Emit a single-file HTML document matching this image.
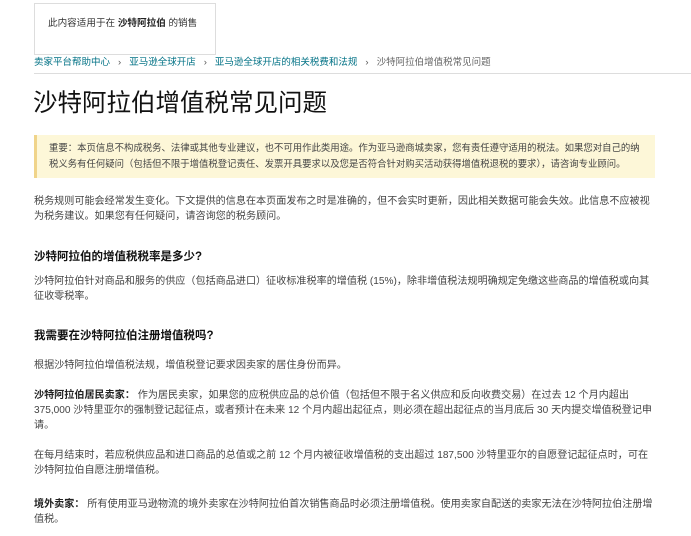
<!DOCTYPE html>
<html><head><meta charset="utf-8"><style>
body{margin:0;width:691px;height:536px;overflow:hidden;background:#fff;font-family:"Liberation Sans","Noto Sans CJK SC",sans-serif;color:#333;position:relative}
.a{position:absolute;white-space:nowrap}
.box{position:absolute;left:34px;top:3px;width:182px;height:52px;border:1px solid #ddd;box-sizing:border-box}
.bc{font-size:9.5px;color:#007185}
.bc .s{color:#555;margin:0 8px}
.bc .g{color:#666}
h1{position:absolute;left:33px;top:84px;margin:0;font-size:24.5px;font-weight:400;color:#111;white-space:nowrap}
.note{position:absolute;left:34px;top:135px;width:621px;height:43px;background:#fdf7d8;border-left:3px solid #f0d48a;box-sizing:border-box}
.note div{position:absolute;left:12px;top:5px;font-size:9.4px;line-height:15.5px;color:#444;white-space:nowrap}
.p{font-size:10.1px;line-height:15px;color:#444}
.h{font-size:11.5px;font-weight:700;color:#111}
b{color:#222}
</style></head><body>
<div class="box"></div>
<div class="a" style="left:48px;top:15px;font-size:9.6px;color:#333">此内容适用于在 <b>沙特阿拉伯</b> 的销售</div>
<div class="a bc" style="left:34px;top:54px">卖家平台帮助中心<span class="s">›</span>亚马逊全球开店<span class="s">›</span>亚马逊全球开店的相关税费和法规<span class="s">›</span><span class="g">沙特阿拉伯增值税常见问题</span></div>
<div class="a" style="left:34px;top:73px;width:657px;height:1px;background:#ddd"></div>
<h1>沙特阿拉伯增值税常见问题</h1>
<div class="note"><div>重要：本页信息不构成税务、法律或其他专业建议，也不可用作此类用途。作为亚马逊商城卖家，您有责任遵守适用的税法。如果您对自己的纳<br>税义务有任何疑问（包括但不限于增值税登记责任、发票开具要求以及您是否符合针对购买活动获得增值税退税的要求），请咨询专业顾问。</div></div>
<div class="a p" style="left:34px;top:194px">税务规则可能会经常发生变化。下文提供的信息在本页面发布之时是准确的，但不会实时更新，因此相关数据可能会失效。此信息不应被视<br>为税务建议。如果您有任何疑问，请咨询您的税务顾问。</div>
<div class="a h" style="left:34px;top:248px">沙特阿拉伯的增值税税率是多少?</div>
<div class="a p" style="left:34px;top:274px">沙特阿拉伯针对商品和服务的供应（包括商品进口）征收标准税率的增值税 (15%)，除非增值税法规明确规定免缴这些商品的增值税或向其<br>征收零税率。</div>
<div class="a h" style="left:34px;top:327px">我需要在沙特阿拉伯注册增值税吗?</div>
<div class="a p" style="left:34px;top:358px">根据沙特阿拉伯增值税法规，增值税登记要求因卖家的居住身份而异。</div>
<div class="a p" style="left:34px;top:388px"><b>沙特阿拉伯居民卖家：</b> 作为居民卖家，如果您的应税供应品的总价值（包括但不限于名义供应和反向收费交易）在过去 12 个月内超出<br>375,000 沙特里亚尔的强制登记起征点，或者预计在未来 12 个月内超出起征点，则必须在超出起征点的当月底后 30 天内提交增值税登记申<br>请。</div>
<div class="a p" style="left:34px;top:448px">在每月结束时，若应税供应品和进口商品的总值或之前 12 个月内被征收增值税的支出超过 187,500 沙特里亚尔的自愿登记起征点时，可在<br>沙特阿拉伯自愿注册增值税。</div>
<div class="a p" style="left:34px;top:497px"><b>境外卖家：</b> 所有使用亚马逊物流的境外卖家在沙特阿拉伯首次销售商品时必须注册增值税。使用卖家自配送的卖家无法在沙特阿拉伯注册增<br>值税。</div>
</body></html>
